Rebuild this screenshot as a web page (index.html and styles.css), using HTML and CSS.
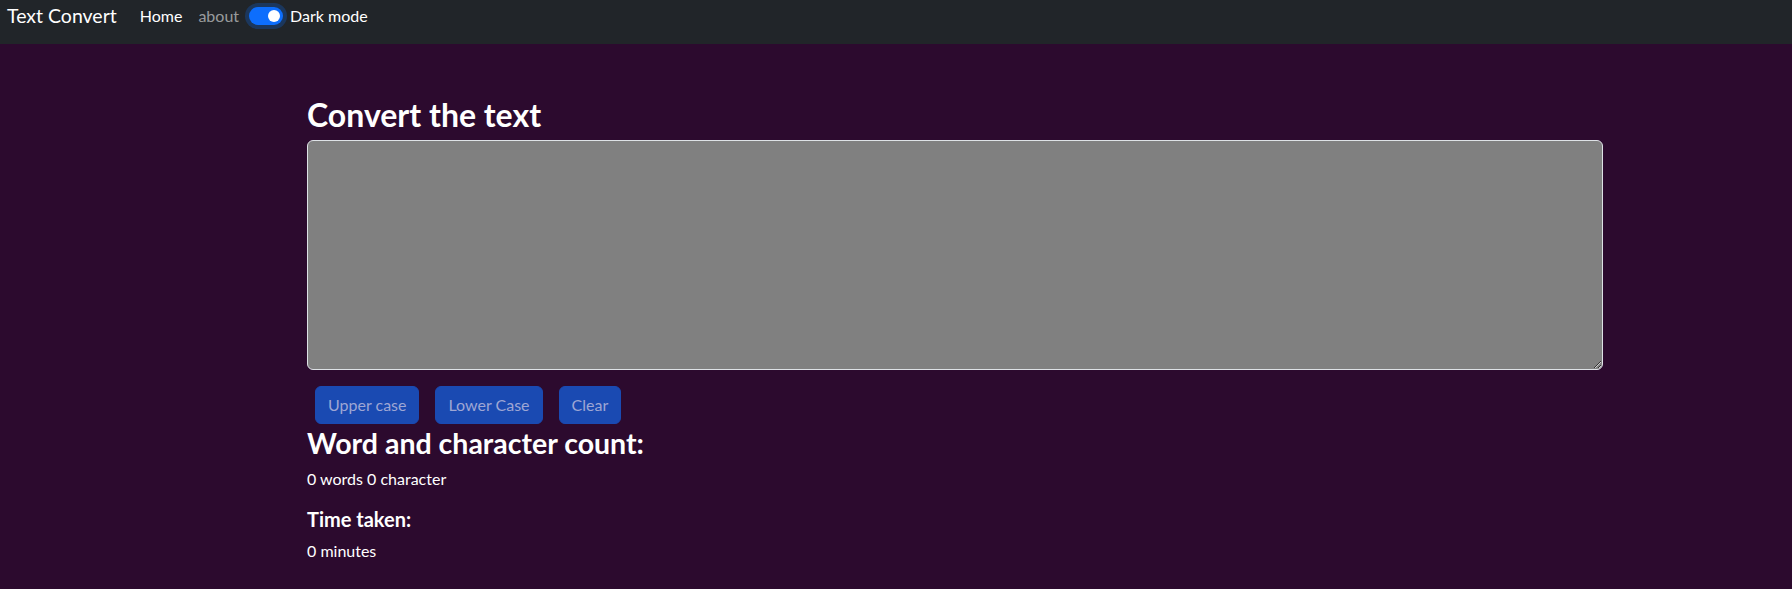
FILE: index.html
```html
<!DOCTYPE html>
<html lang="en">
<head>
<meta charset="utf-8">
<title>Text Convert</title>
<link rel="stylesheet" href="styles.css">
</head>
<body>
<nav class="navbar">
  <a class="brand" href="#">Text Convert</a>
  <ul class="nav">
    <li><a class="nav-link active" href="#">Home</a></li>
    <li><a class="nav-link" href="#">about</a></li>
  </ul>
  <label class="switch">
    <span class="switch-track"><span class="switch-knob"></span></span>
    <span class="switch-label">Dark mode</span>
  </label>
</nav>
<main class="container">
  <h1 class="title">Convert the text</h1>
  <textarea class="text-input"></textarea>
  <div class="actions">
    <button class="btn" disabled>Upper case</button>
    <button class="btn" disabled>Lower Case</button>
    <button class="btn" disabled>Clear</button>
  </div>
  <h2 class="subtitle">Word and character count:</h2>
  <p class="count">0 words 0 character</p>
  <h3 class="small-title">Time taken:</h3>
  <p class="count">0 minutes</p>
</main>
</body>
</html>
```
FILE: styles.css
```css
* { box-sizing: border-box; }
html, body { margin: 0; padding: 0; }
body {
  background: #2c0a2e;
  color: #fff;
  font-family: "Lato", "Open Sans", sans-serif;
  font-size: 16px;
  line-height: 1.5;
}
.navbar {
  background: #212529;
  height: 44px;
  display: flex;
  align-items: center;
  padding: 0 0 12px 7px;
}
.brand {
  color: #fff;
  text-decoration: none;
  font-size: 19.5px;
  line-height: 30px;
  margin-right: 15px;
}
.nav {
  list-style: none;
  margin: 0;
  padding: 0;
  display: flex;
}
.nav-link {
  display: block;
  padding: 0 8px;
  line-height: 24px;
  color: rgba(255, 255, 255, 0.55);
  text-decoration: none;
}
.nav-link.active { color: #fff; }
.switch {
  display: flex;
  align-items: center;
  margin-left: 2px;
}
.switch-track {
  width: 34px;
  height: 18px;
  border-radius: 9px;
  background: #0d6efd;
  box-shadow: 0 0 0 4px rgba(13, 110, 253, 0.25);
  display: flex;
  align-items: center;
  justify-content: flex-end;
  padding-right: 3px;
}
.switch-knob {
  width: 12px;
  height: 12px;
  border-radius: 50%;
  background: #fff;
}
.switch-label {
  margin-left: 7px;
  line-height: 24px;
  color: #fff;
}
.container {
  width: 1296px;
  margin-left: 307px;
  padding-top: 52px;
}
.title {
  font-size: 32px;
  font-weight: 700;
  line-height: 1.2;
  margin: 0 0 6px;
}
.text-input {
  display: block;
  width: 100%;
  height: 230px;
  background: #808080;
  color: #fff;
  border: 1px solid #dee2e6;
  border-radius: 6px;
  padding: 6px 12px;
  font: inherit;
  margin: 0 0 16px;
}
.actions {
  display: flex;
  gap: 16px;
  padding-left: 8px;
}
.btn {
  font: inherit;
  line-height: 24px;
  padding: 6px 12px;
  border: 1px solid #1a4ab2;
  border-radius: 6px;
  background: #1a4ab2;
  color: #9ea6d4;
}
.subtitle {
  font-size: 28.5px;
  font-weight: 700;
  line-height: 1.2;
  margin: 2px 0 6px;
}
.count {
  margin: 0 0 16px;
}
.small-title {
  font-size: 20px;
  font-weight: 700;
  line-height: 1.2;
  margin: 0 0 8px;
}
```
